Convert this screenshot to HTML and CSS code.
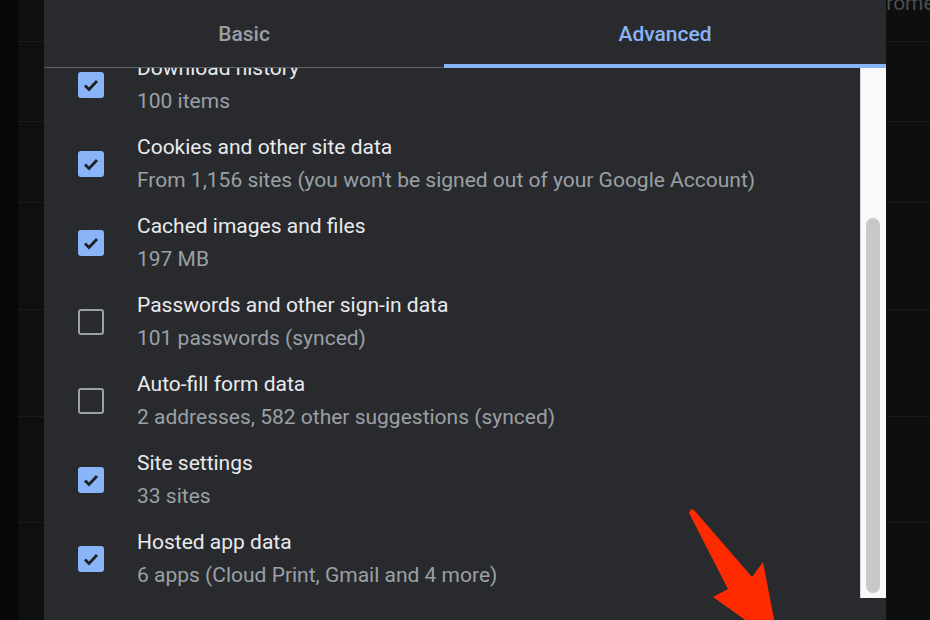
FILE: index.html
```html
<!DOCTYPE html>
<html lang="en">

<head>
    <meta charset="UTF-8">
    <meta name="viewport" content="width=device-width, initial-scale=1.0">
    <title>Clear browsing data</title>
    <link rel="stylesheet" href="styles.css">
</head>

<body>
    <div class="page">
        <div class="side left">
            <div class="edge"></div>
            <div class="cells">
                <div class="cell c1"></div>
                <div class="cell c2"></div>
                <div class="cell c3"></div>
                <div class="cell c4"></div>
                <div class="cell c4"></div>
                <div class="cell c5"></div>
                <div class="cell last"></div>
            </div>
        </div>

        <div class="dialog">
            <div class="tabs">
                <div class="tab basic">Basic</div>
                <div class="tab active">Advanced</div>
            </div>

            <div class="scroll">
                <div class="list">
                    <div class="rows">
                        <div class="row">
                            <span class="box on"><svg viewBox="0 0 26 26"><path d="M7 13.5l4 4 8-8.5" /></svg></span>
                            <div class="text">
                                <p class="title">Download history</p>
                                <p class="sub">100 items</p>
                            </div>
                        </div>
                        <div class="row">
                            <span class="box on"><svg viewBox="0 0 26 26"><path d="M7 13.5l4 4 8-8.5" /></svg></span>
                            <div class="text">
                                <p class="title">Cookies and other site data</p>
                                <p class="sub">From 1,156 sites (you won't be signed out of your Google Account)</p>
                            </div>
                        </div>
                        <div class="row">
                            <span class="box on"><svg viewBox="0 0 26 26"><path d="M7 13.5l4 4 8-8.5" /></svg></span>
                            <div class="text">
                                <p class="title">Cached images and files</p>
                                <p class="sub">197 MB</p>
                            </div>
                        </div>
                        <div class="row">
                            <span class="box"></span>
                            <div class="text">
                                <p class="title">Passwords and other sign-in data</p>
                                <p class="sub">101 passwords (synced)</p>
                            </div>
                        </div>
                        <div class="row">
                            <span class="box"></span>
                            <div class="text">
                                <p class="title">Auto-fill form data</p>
                                <p class="sub">2 addresses, 582 other suggestions (synced)</p>
                            </div>
                        </div>
                        <div class="row">
                            <span class="box on"><svg viewBox="0 0 26 26"><path d="M7 13.5l4 4 8-8.5" /></svg></span>
                            <div class="text">
                                <p class="title">Site settings</p>
                                <p class="sub">33 sites</p>
                            </div>
                        </div>
                        <div class="row">
                            <span class="box on"><svg viewBox="0 0 26 26"><path d="M7 13.5l4 4 8-8.5" /></svg></span>
                            <div class="text">
                                <p class="title">Hosted app data</p>
                                <p class="sub">6 apps (Cloud Print, Gmail and 4 more)</p>
                            </div>
                        </div>
                    </div>
                </div>
                <div class="track">
                    <div class="thumb"></div>
                </div>
            </div>
        </div>

        <div class="side right">
            <div class="cell c1"><span class="brand">Chrome</span></div>
            <div class="cell c2"></div>
            <div class="cell c3"></div>
            <div class="cell c4"></div>
            <div class="cell c4"></div>
            <div class="cell c5"></div>
            <div class="cell last"></div>
        </div>

        <svg class="arrow" viewBox="680 500 110 120">
            <polygon points="689,513 691,509 694,510 752,577 763,562 778,640 748,622 713,597 728,589" />
        </svg>
    </div>
</body>

</html>
```

FILE: styles.css
```css
* {
    margin: 0;
    padding: 0;
    box-sizing: border-box;
}

body {
    background-color: #0d0e0e;
    font-family: Roboto, "Liberation Sans", sans-serif;
}

.page {
    height: 620px;
    width: 930px;
    display: flex;
    position: relative;
    overflow: hidden;
}

.side {
    height: 620px;
    display: flex;
}

.left {
    width: 44px;
}

.edge {
    width: 18px;
    background-color: #070707;
}

.cells {
    flex: 1;
    display: flex;
    flex-direction: column;
    background-color: #0e0f0f;
}

.right {
    width: 44px;
    flex-direction: column;
    overflow: hidden;
    background-color: #0d0e0e;
}

.cell {
    border-bottom: 1px solid #1b1c1d;
}

.c1 { height: 42px; }
.c2 { height: 80px; }
.c3 { height: 81px; }
.c4 { height: 107px; }
.c5 { height: 106px; }

.last {
    flex: 1;
    border-bottom: none;
}

.brand {
    display: block;
    margin-left: -25px;
    margin-top: -7px;
    font-size: 21px;
    line-height: 21px;
    color: #4a4c4f;
    white-space: nowrap;
}

.dialog {
    width: 842px;
    height: 620px;
    display: flex;
    flex-direction: column;
    background-color: #292a2d;
}

.tabs {
    height: 68px;
    display: flex;
}

.tab {
    flex: 1;
    display: flex;
    align-items: center;
    justify-content: center;
    font-size: 21px;
    font-weight: 500;
    color: #9aa0a6;
    border-bottom: 1px solid #5f6368;
}

.basic {
    flex: 0 0 400px;
}

.active {
    color: #8ab4f8;
    border-bottom: 4px solid #8ab4f8;
    padding-top: 3px;
}

.scroll {
    height: 530px;
    display: flex;
}

.list {
    flex: 1;
    overflow: hidden;
}

.rows {
    margin-top: -23px;
}

.row {
    height: 79px;
    display: flex;
    align-items: center;
    gap: 33px;
    padding-left: 34px;
}

.box {
    width: 26px;
    height: 26px;
    border: 2px solid #9aa0a6;
    border-radius: 3px;
    flex-shrink: 0;
}

.on {
    border: none;
    background-color: #8ab4f8;
}

.box svg {
    display: block;
    width: 26px;
    height: 26px;
    fill: none;
    stroke: #202124;
    stroke-width: 2.8;
}

.title {
    font-size: 21px;
    line-height: 33px;
    color: #e8eaed;
}

.sub {
    font-size: 21px;
    line-height: 33px;
    color: #9aa0a6;
}

.track {
    width: 26px;
    display: flex;
    flex-direction: column;
    padding: 150px 6px 5px 5px;
    background-color: #f9f9f9;
    border-left: 1px solid #d6d6d6;
}

.thumb {
    flex: 1;
    border-radius: 7px;
    background-color: #c8c8c8;
}

.arrow {
    position: absolute;
    left: 680px;
    top: 500px;
    width: 110px;
    height: 120px;
    fill: #ff2a00;
}
```
